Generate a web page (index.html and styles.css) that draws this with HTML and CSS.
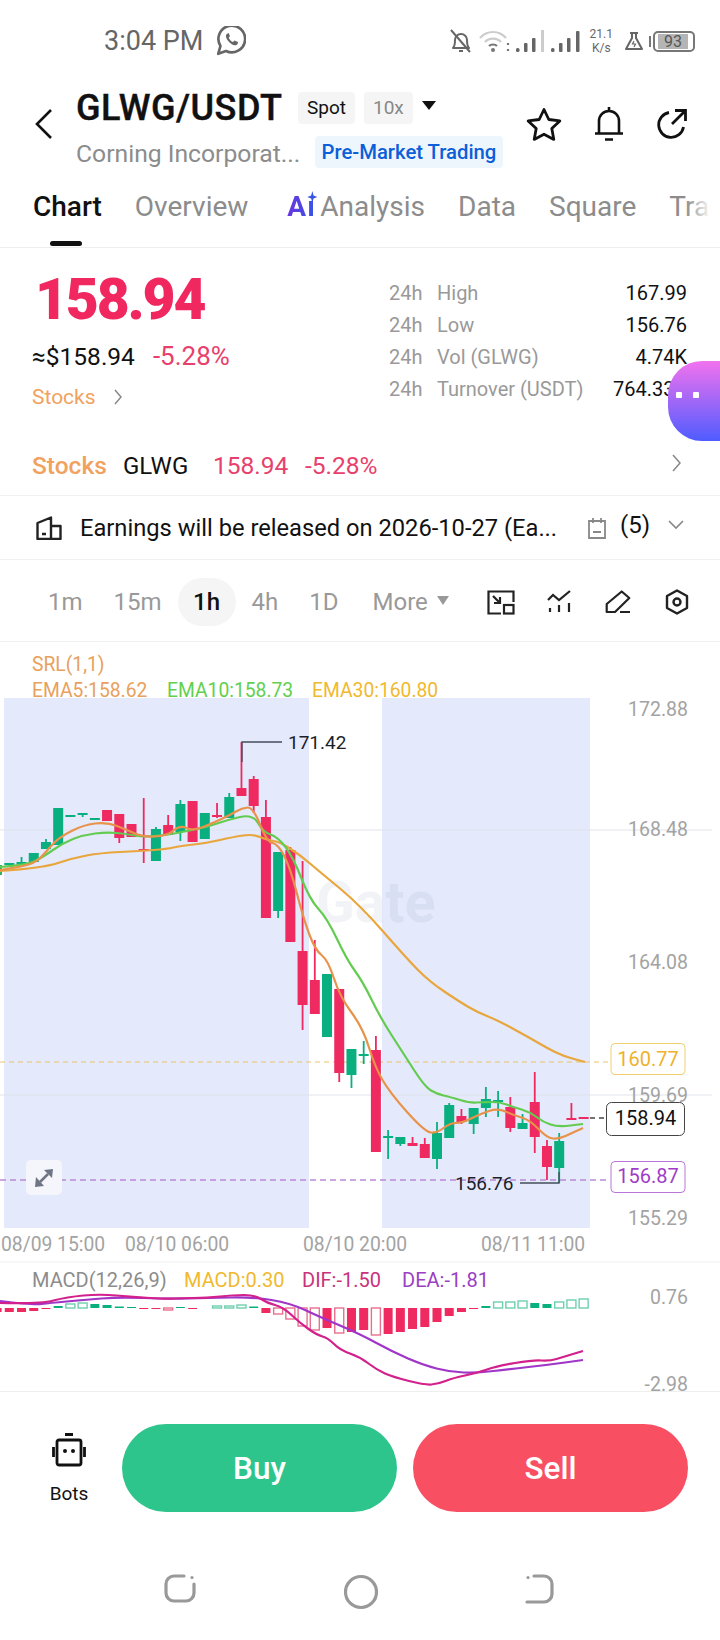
FILE: index.html
```html
<!DOCTYPE html>
<html lang="en">
<head>
  <meta charset="UTF-8" />
  <meta name="viewport" content="width=device-width, initial-scale=1.0"/>
  <title>GLWG/USDT Chart</title>
  <link rel="stylesheet" href="styles.css">
</head>
<body>
  <div class="page">
    <!-- status bar -->
    <div class="statusbar">
      <span class="clock">3:04 PM</span>
      <svg class="wa" width="30" height="30" viewBox="1 1 27 27" fill="none" stroke="#666" stroke-width="2.400">
        <path d="M3 26l2-7a12 12 0 1 1 5 4.500z" stroke-linejoin="round"/>
        <path d="M11 8c-1.500 1-1.500 3.500 1 6.500s5 4.500 7.500 3.500c1.200-.6 1.500-2 1.200-2.500l-3-1.500-1.300 1.500c-1.500-.5-3.400-2.400-4-4l1.200-1.300-1.200-2.800z" fill="#666" stroke="none"/>
      </svg>
      <div class="status-right">
        <svg width="26" height="26" viewBox="0 0 26 26" fill="none" stroke="#666" stroke-width="2">
          <path d="M5 20c2-2 2-4 2-8a6 6 0 0 1 12 0c0 4 0 6 2 8z" stroke-linejoin="round"/>
          <path d="M11 23h4M3 2l19 22"/>
        </svg>
        <svg width="32" height="24" viewBox="0 0 32 24" fill="none" stroke="#ccc" stroke-width="2.200">
          <path d="M1 9c7-8 19-8 26 0M6 13c4-4.500 12-4.500 16 0"/>
          <path d="M10 17c2-2 6-2 8 0" stroke="#777"/>
          <circle cx="14" cy="21" r="2" fill="#777" stroke="none"/>
          <path d="M29 14v2M29 20v2" stroke="#777"/>
        </svg>
        <svg width="30" height="24" viewBox="0 0 30 24" fill="#666">
          <rect x="0" y="19" width="3.500" height="4" rx="1.500"/><rect x="8" y="14" width="3.500" height="9" rx="1"/><rect x="16" y="9" width="3.500" height="14" rx="1"/><rect x="25" y="1" width="3" height="22" fill="#ccc"/>
        </svg>
        <svg width="30" height="24" viewBox="0 0 30 24" fill="#666">
          <rect x="0" y="19" width="3.500" height="4" rx="1.500"/><rect x="8" y="14" width="3.500" height="9" rx="1"/><rect x="16" y="9" width="3.500" height="14" rx="1"/><rect x="25" y="2" width="3.500" height="21" rx="1"/>
        </svg>
        <div class="speed"><span>21.1</span><span>K/s</span></div>
        <svg class="flask" width="20" height="20" viewBox="0 0 20 20" fill="none" stroke="#666" stroke-width="2">
          <path d="M6 2h8M8 2v5L2 18h16L12 7V2" stroke-linejoin="round"/><path d="M10 10l-1.500 3h3l-1.500 3" stroke-width="1.200"/>
        </svg>
        <div class="battery"><span class="battery-fill">93</span></div>
      </div>
    </div>

    <!-- title -->
    <div class="titlebar">
      <svg class="back" width="18" height="30" viewBox="0 0 18 30" fill="none" stroke="#111" stroke-width="2.600"><path d="M16 1L2 15l14 14"/></svg>
      <div class="title-main">
        <div class="title-line">
          <span class="pair">GLWG/USDT</span>
          <span class="chip">Spot</span>
          <span class="chip chip-gray">10x</span>
          <span class="tri-down"></span>
        </div>
        <div class="sub-line">
          <span class="company">Corning Incorporat...</span>
          <span class="premarket">Pre-Market Trading</span>
        </div>
      </div>
      <div class="title-icons">
        <svg width="36" height="34" viewBox="0 0 36 34" fill="none" stroke="#111" stroke-width="2.800" stroke-linejoin="round"><path d="M18 2.500l4.800 10 11 1.400-8 7.600 2 10.900L18 27.200 8.200 32.400l2-10.900-8-7.600 11-1.400z"/></svg>
        <svg width="30" height="36" viewBox="0 0 30 36" fill="none" stroke="#111" stroke-width="2.600"><path d="M5 27V15a10 10 0 0 1 20 0v12M1 27.500h28M11 33.500h8M15 1v4"/></svg>
        <svg width="32" height="32" viewBox="0 0 32 32" fill="none" stroke="#111" stroke-width="2.800"><path d="M13 4.500A12.500 12.500 0 1 0 27.500 19M16 16L29 3M19 2.500h10.500V13"/></svg>
      </div>
    </div>

    <!-- tabs -->
    <div class="tabs">
      <span class="tab tab-active">Chart</span>
      <span class="tab">Overview</span>
      <span class="tab tab-analysis"><span class="ai">Aı</span>Analysis</span>
      <span class="tab">Data</span>
      <span class="tab">Square</span>
      <span class="tab">Trade</span>
      <span class="tab-bar"></span>
    </div>

    <!-- price block -->
    <div class="quote">
      <div class="quote-left">
        <div class="price">158.94</div>
        <div class="price-sub"><span>≈$158.94</span><span class="red price-pct">-5.28%</span></div>
        <div class="tag-link">
          <span>Stocks</span>
          <svg width="10" height="16" viewBox="0 0 10 16" fill="none" stroke="#888" stroke-width="1.500"><path d="M2 1l6 7-6 7"/></svg>
        </div>
      </div>
      <div class="stats">
        <div class="stat"><span class="stat-h">24h</span><span class="stat-label">High</span><span class="stat-val">167.99</span></div>
        <div class="stat"><span class="stat-h">24h</span><span class="stat-label">Low</span><span class="stat-val">156.76</span></div>
        <div class="stat"><span class="stat-h">24h</span><span class="stat-label">Vol (GLWG)</span><span class="stat-val">4.74K</span></div>
        <div class="stat"><span class="stat-h">24h</span><span class="stat-label">Turnover (USDT)</span><span class="stat-val">764.33K</span></div>
      </div>
      <div class="bubble"><i></i><i></i></div>
    </div>

    <!-- stock row -->
    <div class="stock-row">
      <span class="stock-tag">Stocks</span>
      <span class="stock-name">GLWG</span>
      <span class="red stock-price">158.94</span>
      <span class="red stock-pct">-5.28%</span>
      <svg class="row-chev" width="10" height="18" viewBox="0 0 10 18" fill="none" stroke="#888" stroke-width="1.500"><path d="M1 1l7 8-7 8"/></svg>
    </div>

    <!-- earnings row -->
    <div class="earnings">
      <svg width="26" height="24" viewBox="0 0 26 24" fill="none" stroke="#222" stroke-width="2.400" stroke-linejoin="round"><path d="M1.500 23V7L15 1.500V23zM15 10h9.500v13H1.500M6 18h4"/></svg>
      <span class="earn-text">Earnings will be released on 2026-10-27 (Ea...</span>
      <svg width="20" height="22" viewBox="0 0 20 22" fill="none" stroke="#888" stroke-width="1.800"><path d="M2 4h16v17H2zM6 1v5M14 1v5M6 15h8"/></svg>
      <span class="earn-count">(5)</span>
      <svg class="earn-chev" width="16" height="10" viewBox="0 0 16 10" fill="none" stroke="#888" stroke-width="1.600"><path d="M1 1l7 7 7-7"/></svg>
    </div>

    <!-- interval toolbar -->
    <div class="toolbar">
      <span class="iv">1m</span>
      <span class="iv iv-15m">15m</span>
      <span class="iv iv-active">1h</span>
      <span class="iv iv-4h">4h</span>
      <span class="iv iv-1d">1D</span>
      <span class="iv iv-more">More</span>
      <span class="tri-gray"></span>
      <div class="tool-icons">
        <svg width="28" height="25" viewBox="0 0 28 25" fill="none" stroke="#222" stroke-width="2.200"><path d="M14 23.500H1.500V1.500h25V12"/><rect x="17" y="15" width="9.500" height="8.500"/><path d="M6 6l7 7M13 7v6H7"/></svg>
        <svg width="26" height="25" viewBox="0 0 26 25" fill="none" stroke="#222" stroke-width="2.200"><path d="M1 10l5-5 6 5L23 1M3 18v4M12 15v7M22 13v9"/></svg>
        <svg width="28" height="24" viewBox="0 0 28 24" fill="none" stroke="#222" stroke-width="2.200" stroke-linejoin="round"><path d="M1.700 22v-8L16.700 1.500 24.300 8 10 22zM15 22h10"/></svg>
        <svg width="24" height="26" viewBox="0 0 24 26" fill="none" stroke="#222" stroke-width="2.400" stroke-linejoin="round"><path d="M12 1.500l10 5.500v12l-10 5.500L2 19V7z"/><circle cx="12" cy="13" r="3.500"/></svg>
      </div>
    </div>

    <!-- chart, drawn in page coordinates -->
    <div class="chart">
      <svg id="chart" width="720" height="750" viewBox="0 642 720 750">
        <rect x="4" y="698" width="305" height="530" fill="#e4e9fb"/>
        <rect x="382" y="698" width="208" height="530" fill="#e4e9fb"/>
        <text class="watermark" x="316" y="922">Gate</text>
        <path d="M0 830H712M0 1095H712" stroke="#dfe3ea" stroke-width="1"/>
        <path d="M0 1062H610" stroke="#eac46a" stroke-width="1.200" stroke-dasharray="5 4"/>
        <path d="M0 1180H610" stroke="#b98ad6" stroke-width="1.500" stroke-dasharray="6 4"/>
        <path d="M590 1118H606" stroke="#444" stroke-width="1.500" stroke-dasharray="5 4"/>

        <g id="candles"></g>

        <path class="ma" stroke="#e8a63c" d="M0 871L43 868L73 858L100 853L140 851L167 849L180 846L207 843L233 837L253 834L267 840L280 842L300 855L320 872L360 905L408 960L430 982L460 1002L477 1012L497 1020L530 1038L547 1048L563 1056L585 1062"/>
        <path class="ma" stroke="#63cc50" d="M0 867L27 865L43 857L63 843L83 835L107 832L127 834L143 837L167 835L187 831L207 827L227 820L253 814L263 832L278 837L293 857L310 900L327 918L347 960L363 982L380 1017L403 1053L425 1087L437 1094L450 1097L470 1103L483 1102L500 1102L513 1107L530 1112L543 1122L558 1127L583 1124"/>
        <path class="ma" stroke="#e8924a" d="M0 870L20 867L37 862L50 847L60 837L83 825L107 822L127 830L143 837L167 836L180 825L193 831L213 823L230 815L242 808L253 807L267 842L278 844L290 867L303 917L315 950L328 960L340 997L363 1028L375 1067L390 1093L425 1132L437 1133L450 1123L462 1123L480 1114L498 1108L513 1115L530 1120L547 1138L559 1139L572 1133L583 1128"/>

        <!-- price marks -->
        <path d="M242 762V742H282M520 1183H559V1172" fill="none" stroke="#444c5c" stroke-width="1.300"/>
        <text class="mark" x="288" y="749">171.42</text>
        <text class="mark" x="455" y="1190">156.76</text>

        <!-- legend -->
        <text class="lg" x="32" y="671" fill="#e8a15c">SRL(1,1)</text>
        <text class="lg" x="32" y="697" fill="#e8a15c">EMA5:158.62</text>
        <text class="lg" x="167" y="697" fill="#62d04e">EMA10:158.73</text>
        <text class="lg" x="312" y="697" fill="#f0b92e">EMA30:160.80</text>

        <!-- y axis -->
        <text class="axis" x="688" y="716">172.88</text>
        <text class="axis" x="688" y="836">168.48</text>
        <text class="axis" x="688" y="969">164.08</text>
        <text class="axis" x="688" y="1102">159.69</text>
        <text class="axis" x="688" y="1225">155.29</text>

        <!-- current price boxes -->
        <rect x="611" y="1043.500" width="74" height="31" rx="4" fill="#fff" stroke="#f0cf6e"/>
        <text class="box-t" x="648" y="1066" fill="#eeb22c">160.77</text>
        <rect x="606.500" y="1102.500" width="78" height="33" rx="5" fill="#fff" stroke="#444"/>
        <text class="box-t" x="645.500" y="1125" fill="#111">158.94</text>
        <rect x="611" y="1161.500" width="74" height="31" rx="4" fill="#fff" stroke="#b775d8"/>
        <text class="box-t" x="648" y="1183" fill="#a03cc8">156.87</text>

        <!-- expand button -->
        <rect x="26" y="1160" width="36" height="35" rx="5" fill="#f5f6fb"/>
        <path d="M53 1169L44 1170L52 1178zM35 1187L36 1177L44 1186z" fill="#6f7585"/>
        <path d="M40 1182L48 1174" stroke="#6f7585" stroke-width="2.500"/>

        <!-- time axis -->
        <path d="M0 1262H720" stroke="#eeeeee"/>
        <text class="tm" x="1" y="1251">08/09 15:00</text>
        <text class="tm" x="125" y="1251">08/10 06:00</text>
        <text class="tm" x="303" y="1251">08/10 20:00</text>
        <text class="tm" x="481" y="1251">08/11 11:00</text>

        <!-- macd -->
        <text class="lg2" x="32" y="1287" fill="#8c8c8c">MACD(12,26,9)</text>
        <text class="lg2" x="184" y="1287" fill="#f0b92e">MACD:0.30</text>
        <text class="lg2" x="302" y="1287" fill="#c8337c">DIF:-1.50</text>
        <text class="lg2" x="402" y="1287" fill="#9b3fc4">DEA:-1.81</text>
        <text class="axis" x="688" y="1304">0.76</text>
        <text class="axis" x="688" y="1391">-2.98</text>
        <g id="macd"></g>
        <path class="ma" stroke="#a035c8" d="M0 1301L33 1305L50 1303L83 1300L120 1297L167 1299L207 1298L253 1297L290 1303L320 1317L360 1334L393 1352L423 1365L450 1372L477 1373L510 1369L547 1365L583 1360"/>
        <path class="ma" stroke="#d2208c" d="M0 1303L40 1304L67 1297L100 1294L133 1297L167 1299L180 1298L207 1298L233 1295L255 1295L267 1303L283 1307L300 1323L317 1335L328 1338L340 1350L360 1357L377 1370L393 1377L425 1385L438 1384L453 1378L477 1373L497 1366L533 1360L550 1361L563 1357L583 1351"/>
        <path d="M0 1391.500H720" stroke="#eeeeee"/>
      </svg>
    </div>

    <!-- buy / sell -->
    <div class="actions">
      <div class="bots">
        <svg width="34" height="34" viewBox="0 0 34 34" fill="none" stroke="#111" stroke-width="2.800" stroke-linejoin="round">
          <path d="M13 1.500h8" stroke-width="3"/><rect x="5" y="7" width="24" height="25" rx="2"/><path d="M1.500 14v10M32.500 14v10"/>
          <circle cx="13" cy="18" r="2" fill="#111" stroke="none"/><circle cx="21" cy="18" r="2" fill="#111" stroke="none"/>
        </svg>
        <span>Bots</span>
      </div>
      <button class="btn btn-buy">Buy</button>
      <button class="btn btn-sell">Sell</button>
    </div>

    <!-- android nav -->
    <div class="sysnav">
      <svg width="34" height="30" viewBox="0 0 34 30" fill="none" stroke="#999" stroke-width="3.200" stroke-linecap="round"><path d="M21 2H11a8 8 0 0 0-8 8v9a8 8 0 0 0 8 8h12a8 8 0 0 0 8-8v-9"/><circle cx="29" cy="3.500" r="1.600" fill="#999" stroke="none"/></svg>
      <svg width="36" height="36" viewBox="0 0 36 36" fill="none" stroke="#999" stroke-width="3.200"><circle cx="18" cy="18" r="15.500"/></svg>
      <svg width="30" height="30" viewBox="0 0 30 30" fill="none" stroke="#999" stroke-width="3.200" stroke-linecap="round"><path d="M9 2h10a8 8 0 0 1 8 8v10a8 8 0 0 1-8 8H2"/><circle cx="3" cy="3.500" r="1.600" fill="#999" stroke="none"/></svg>
    </div>
  </div>
  <script src="chart.js"></script>
</body>
</html>
```

FILE: styles.css
```css
* {
  box-sizing: border-box;
}
body {
  margin: 0;
  background: #fff;
  font-family: Roboto, "Liberation Sans", sans-serif;
  color: #111;
}
.page {
  width: 720px;
  height: 1640px;
  overflow: hidden;
  display: flex;
  flex-direction: column;
}
.red {
  color: #e8406c;
}

/* status bar */
.statusbar {
  height: 82px;
  display: flex;
  align-items: center;
  padding: 0 25px 0 104px;
}
.clock {
  font-size: 27px;
  color: #666;
}
.wa {
  margin-left: 13px;
}
.status-right {
  margin-left: auto;
  display: flex;
  align-items: center;
  gap: 5px;
}
.speed {
  display: flex;
  flex-direction: column;
  align-items: center;
  font-size: 12px;
  line-height: 14px;
  color: #666;
  margin-left: 4px;
}
.flask {
  margin-left: 6px;
}
.battery {
  position: relative;
  width: 42px;
  height: 21px;
  border: 2px solid #777;
  border-radius: 5px;
  padding: 1px 5px 1px 3px;
  margin-left: 4px;
}
.battery::before {
  content: "";
  position: absolute;
  left: -6px;
  top: 3px;
  width: 2px;
  height: 11px;
  background: #777;
}
.battery-fill {
  display: block;
  height: 15px;
  background: #b5b5b5;
  font-size: 16px;
  line-height: 15px;
  color: #555;
  text-align: center;
}

/* title */
.titlebar {
  height: 90px;
  display: flex;
  align-items: center;
  padding: 0 32px 0 35px;
}
.back {
  margin-top: -6px;
}
.title-main {
  margin: 5px 0 0 23px;
}
.title-line {
  display: flex;
  align-items: center;
  height: 34px;
}
.pair {
  font-size: 36px;
  font-weight: 500;
  letter-spacing: 0.5px;
  -webkit-text-stroke: 0.4px #111;
  width: 222px;
}
.chip {
  height: 32px;
  padding: 0 9px;
  margin-right: 9px;
  font-size: 19px;
  line-height: 32px;
  background: #f5f5f5;
  border-radius: 4px;
}
.chip-gray {
  color: #888;
}
.tri-down {
  width: 0;
  height: 0;
  border-left: 7px solid transparent;
  border-right: 7px solid transparent;
  border-top: 9px solid #111;
  margin-bottom: 6px;
}
.sub-line {
  display: flex;
  align-items: center;
  margin-top: 10px;
}
.company {
  font-size: 24.700px;
  color: #8c8c8c;
  width: 239px;
  margin-top: 4px;
  white-space: nowrap;
}
.premarket {
  height: 32px;
  padding: 0 6.500px;
  font-size: 20.300px;
  font-weight: 500;
  line-height: 32px;
  color: #0b5fd8;
  background: #eef6fd;
  border-radius: 4px;
}
.title-icons {
  margin-left: auto;
  margin-top: -6px;
  display: flex;
  align-items: center;
  gap: 32px;
}

/* tabs */
.tabs {
  position: relative;
  height: 76px;
  display: flex;
  gap: 33px;
  padding: 18px 0 0 33px;
  border-bottom: 1px solid #eee;
  overflow: hidden;
  font-size: 28px;
  color: #8c8c8c;
}
.tabs::after {
  content: "";
  position: absolute;
  right: 0;
  top: 0;
  width: 34px;
  height: 70px;
  background: linear-gradient(90deg, rgba(255,255,255,0), #fff 75%);
}
.tab {
  flex: none;
  white-space: nowrap;
}
.tab-active {
  color: #111;
  font-weight: 500;
}
.tab-analysis {
  margin-left: 6px;
}
.ai {
  position: relative;
  display: inline-block;
  width: 33px;
  font-weight: 700;
  letter-spacing: 1px;
  color: transparent;
  background: linear-gradient(90deg, #6a35e0, #2d5ae6);
  -webkit-background-clip: text;
  background-clip: text;
}
.ai::after {
  content: "";
  position: absolute;
  left: 20px;
  top: 1px;
  width: 10px;
  height: 12px;
  background: #3a55e6;
  clip-path: polygon(50% 0, 62% 38%, 100% 50%, 62% 62%, 50% 100%, 38% 62%, 0 50%, 38% 38%);
}
.tab-bar {
  position: absolute;
  left: 50px;
  bottom: 1px;
  width: 32px;
  height: 5px;
  background: #111;
  border-radius: 3px;
}

/* price block */
.quote {
  position: relative;
  height: 192px;
  display: flex;
  padding: 22px 33px 0 32px;
}
.quote-left {
  width: 357px;
  flex: none;
}
.price {
  font-size: 57px;
  font-weight: 900;
  line-height: 60px;
  letter-spacing: -2.200px;
  color: #f0285f;
  margin-left: 3px;
}
.price-sub {
  display: flex;
  align-items: baseline;
  gap: 18px;
  font-size: 24.500px;
  line-height: 30px;
  margin-top: 11px;
}
.price-pct {
  font-size: 26px;
}
.tag-link {
  display: flex;
  align-items: center;
  gap: 17px;
  font-size: 21px;
  line-height: 26px;
  color: #f0a25e;
  margin-top: 12px;
}
.stats {
  flex: 1;
  font-size: 20px;
  padding-top: 7px;
}
.stat {
  display: flex;
  height: 32px;
  line-height: 32px;
  color: #999;
}
.stat-h {
  width: 48px;
}
.stat-val {
  margin-left: auto;
  color: #111;
}
.bubble {
  position: absolute;
  right: 0;
  top: 113px;
  width: 52px;
  height: 80px;
  background: linear-gradient(180deg, #f272ee, #4f5cff);
  border-radius: 34px 0 0 34px;
  display: flex;
  align-items: center;
  gap: 11px;
  padding: 0 0 12px 8px;
}
.bubble i {
  width: 6px;
  height: 6px;
  background: #fff;
  border-radius: 1px;
}

/* stock row */
.stock-row {
  height: 56px;
  display: flex;
  align-items: center;
  padding: 0 38px 4px 32px;
  border-bottom: 1px solid #f0f0f0;
  font-size: 24.500px;
}
.stock-tag {
  width: 91px;
  color: #f0a25e;
  font-weight: 500;
}
.stock-name {
  width: 90px;
  font-size: 24px;
}
.stock-price {
  width: 92px;
}
.row-chev {
  margin-left: auto;
  margin-bottom: 6px;
}

/* earnings */
.earnings {
  height: 64px;
  display: flex;
  align-items: center;
  padding: 0 36px;
  border-bottom: 1px solid #f0f0f0;
}
.earnings > * {
  flex: none;
}
.earn-text {
  margin-left: 18px;
  width: 507px;
  font-size: 23.700px;
  white-space: nowrap;
}
.earn-count {
  margin: 0 0 6px 13px;
  width: 28px;
  font-size: 24px;
}
.earn-chev {
  margin: 0 0 6px 20px;
}

/* toolbar */
.toolbar {
  position: relative;
  height: 82px;
  display: flex;
  align-items: center;
  padding: 3px 0 0 48px;
  border-bottom: 1px solid #f0f0f0;
  font-size: 24px;
  color: #999;
}
.iv-15m {
  margin-left: 31px;
}
.iv-active {
  width: 58px;
  height: 48px;
  margin-left: 16px;
  border-radius: 24px;
  background: #f5f5f5;
  color: #111;
  font-weight: 500;
  line-height: 48px;
  text-align: center;
}
.iv-4h {
  margin-left: 16px;
}
.iv-1d {
  margin-left: 31px;
}
.iv-more {
  margin-left: 34px;
}
.tri-gray {
  width: 0;
  height: 0;
  margin: 0 0 4px 9px;
  border-left: 6px solid transparent;
  border-right: 6px solid transparent;
  border-top: 9px solid #999;
}
.tool-icons {
  margin-left: auto;
  padding-right: 31px;
  display: flex;
  align-items: center;
  gap: 32px;
}

/* chart */
.chart {
  height: 750px;
}
.chart svg {
  display: block;
}
.chart text {
  font-family: Roboto, "Liberation Sans", sans-serif;
}
.ma {
  fill: none;
  stroke-width: 2.200;
  stroke-linejoin: round;
}
.watermark {
  font-size: 57px;
  font-weight: 700;
  fill: #7d90b8;
  opacity: 0.1;
}
.mark {
  font-size: 19px;
  fill: #1a1f2b;
}
.lg {
  font-size: 19.300px;
}
.lg2 {
  font-size: 20px;
}
.axis {
  font-size: 19.500px;
  fill: #a3a3a3;
  text-anchor: end;
}
.tm {
  font-size: 19.300px;
  fill: #a3a3a3;
}
.box-t {
  font-size: 20px;
  text-anchor: middle;
}

/* actions */
.actions {
  height: 168px;
  padding: 32px 32px 0 0;
  display: flex;
  align-items: flex-start;
}
.bots {
  width: 122px;
  padding: 9px 0 0 16px;
  display: flex;
  flex-direction: column;
  align-items: center;
  font-size: 19px;
  gap: 15px;
}
.btn {
  width: 275px;
  height: 88px;
  border: 0;
  border-radius: 44px;
  font-family: Roboto, "Liberation Sans", sans-serif;
  font-size: 31.500px;
  font-weight: 500;
  color: #fff;
}
.btn-buy {
  background: #2ec58d;
}
.btn-sell {
  margin-left: 16px;
  background: #f94f63;
}

/* android nav */
.sysnav {
  height: 80px;
  display: flex;
  align-items: flex-start;
  padding: 14px 0 0 163px;
  gap: 146px;
}
```

FILE: chart.js
```javascript
const GREEN = "#0aaf80";
const RED = "#ee2a60";
const NS = "http://www.w3.org/2000/svg";

function slotX(i) {
  return 9.3 + i * 12.22;
}

function addRect(parent, x, y, w, h, fill, stroke) {
  const r = document.createElementNS(NS, "rect");
  r.setAttribute("x", x);
  r.setAttribute("y", y);
  r.setAttribute("width", w);
  r.setAttribute("height", h);
  r.setAttribute("fill", fill);
  if (stroke) {
    r.setAttribute("stroke", stroke);
    r.setAttribute("stroke-width", 1.4);
  }
  parent.appendChild(r);
}

// color, body top, body bottom, wick top, wick bottom
const candles = [
  ["g", 863, 865, 863, 865], ["g", 862, 864, 857, 864], ["g", 853, 862, 853, 862],
  ["g", 842, 849, 839, 849], ["g", 808, 845, 808, 845], ["g", 815, 817, 815, 817],
  ["g", 813, 815, 813, 817], ["g", 818, 820, 818, 820], ["r", 810, 821, 810, 821],
  ["r", 814, 838, 814, 843], ["r", 824, 837, 824, 837], ["r", 849, 851, 798, 863],
  ["g", 829, 861, 827, 861], ["r", 825, 835, 815, 835], ["g", 804, 832, 800, 841],
  ["r", 801, 842, 801, 842], ["g", 813, 839, 813, 839], ["r", 815, 817, 803, 818],
  ["g", 797, 818, 793, 818], ["r", 788, 796, 742, 796], ["r", 779, 806, 776, 813],
  ["r", 817, 918, 800, 918], ["g", 852, 911, 852, 918], ["r", 850, 942, 847, 942],
  ["r", 951, 1005, 861, 1030], ["r", 980, 1014, 940, 1014], ["g", 974, 1037, 974, 1037],
  ["r", 989, 1073, 989, 1082], ["g", 1049, 1075, 1049, 1088], ["g", 1054, 1056, 1041, 1064],
  ["r", 1050, 1152, 1036, 1152], ["g", 1136, 1138, 1130, 1159], ["g", 1137, 1144, 1137, 1146],
  ["r", 1143, 1146, 1137, 1146], ["r", 1144, 1158, 1138, 1158], ["g", 1133, 1159, 1122, 1169],
  ["g", 1105, 1138, 1103, 1138], ["r", 1116, 1122, 1109, 1124], ["g", 1108, 1124, 1108, 1134],
  ["g", 1099, 1108, 1087, 1117], ["g", 1100, 1102, 1091, 1117], ["r", 1107, 1128, 1097, 1132],
  ["g", 1123, 1129, 1114, 1129], ["r", 1102, 1137, 1072, 1153], ["r", 1146, 1167, 1140, 1180],
  ["g", 1141, 1168, 1133, 1183], ["r", 1118, 1120, 1103, 1120], ["r", 1117, 1119, 1117, 1119]
];

const candleGroup = document.getElementById("candles");
addRect(candleGroup, 0, 865, 2, 10, "#31b45c");
candles.forEach(function (c, i) {
  const fill = c[0] === "g" ? GREEN : RED;
  const x = slotX(i);
  addRect(candleGroup, x - 0.9, c[3], 1.8, c[4] - c[3], fill);
  addRect(candleGroup, x - 5, c[1], 10, c[2] - c[1], fill);
});

// MACD histogram: slot, height from zero line (red below, green above), outlined?
const bars = [
  [-1, -4, 0], [0, -4, 0], [1, -4, 0], [2, -3, 0], [3, -1, 0], [4, 2, 0], [5, 4, 1], [6, 5, 1],
  [7, 4, 0], [8, 3, 0], [9, 1.5, 0], [10, 1, 0], [11, -1, 0], [12, -1, 0], [13, -2, 1], [14, 1, 0],
  [15, -1, 0], [17, 2, 1], [18, 2, 1], [19, 3, 1], [20, 1.5, 0], [21, -5, 0], [22, -6, 1],
  [23, -11, 1], [24, -18, 1], [25, -22, 1], [26, -20, 0], [27, -25, 1], [28, -24, 0], [29, -22, 0],
  [30, -27, 1], [31, -26, 0], [32, -24, 0], [33, -21, 0], [34, -19, 0], [35, -14, 0], [36, -8, 0],
  [37, -4, 0], [38, -1, 0], [39, 2, 0], [40, 6, 1], [41, 6, 1], [42, 7, 1], [43, 5, 0], [44, 4, 0],
  [45, 6, 1], [46, 8, 1], [47, 9, 1]
];

const macdGroup = document.getElementById("macd");
const ZERO = 1308;
bars.forEach(function (b) {
  const x = slotX(b[0]) - 4.5;
  const h = Math.abs(b[1]);
  const y = b[1] < 0 ? ZERO : ZERO - h;
  if (b[2]) {
    const line = b[1] < 0 ? "#e9708f" : "#6fcfae";
    addRect(macdGroup, x, y, 9, h, "none", line);
  } else {
    addRect(macdGroup, x, y, 9, h, b[1] < 0 ? RED : GREEN);
  }
});

// round off the corners of the indicator lines
document.querySelectorAll(".ma").forEach(function (line) {
  const pts = line.getAttribute("d").slice(1).split("L").map(function (p) {
    return p.split(" ").map(Number);
  });
  let d = "M" + pts[0].join(" ");
  for (let i = 1; i < pts.length - 1; i++) {
    const mx = (pts[i][0] + pts[i + 1][0]) / 2;
    const my = (pts[i][1] + pts[i + 1][1]) / 2;
    d += "Q" + pts[i].join(" ") + " " + mx + " " + my;
  }
  d += "L" + pts[pts.length - 1].join(" ");
  line.setAttribute("d", d);
});
```
